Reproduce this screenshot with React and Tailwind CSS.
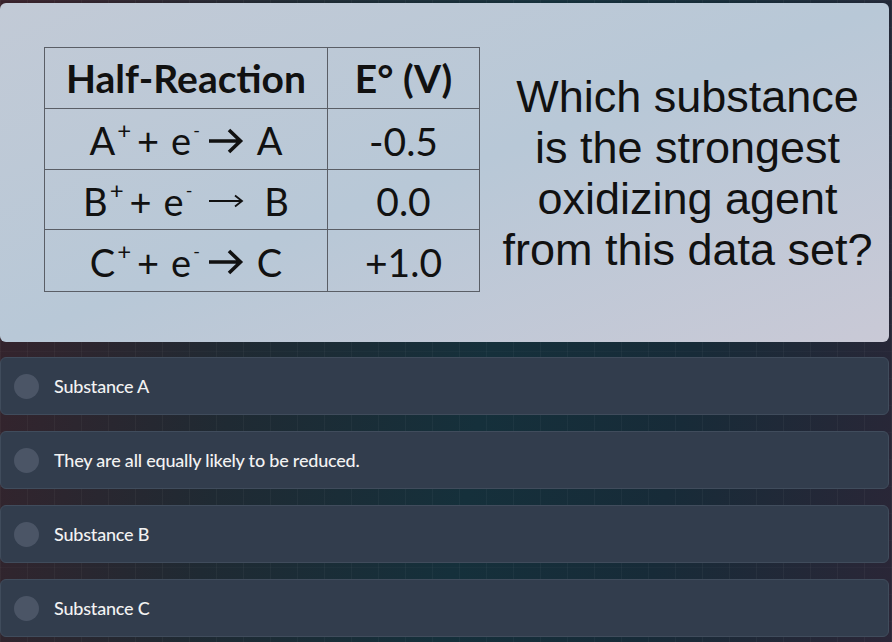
import React from "react";

const options = [
  "Substance A",
  "They are all equally likely to be reduced.",
  "Substance B",
  "Substance C",
];

const HeavyArrow = () => (
  <svg width="36" height="26" viewBox="0 0 36 26" className="ml-[8px] mr-[13px] inline-block">
    <path d="M1 13 H32 M21 2 L32.5 13 L21 24" fill="none" stroke="#111" strokeWidth="3.6" strokeLinejoin="miter" />
  </svg>
);

const ThinArrow = () => (
  <svg width="36" height="16" viewBox="0 0 36 16" className="ml-[16px] mr-[20px] inline-block">
    <path d="M1 8 H34 M27 2.5 L34 8 L27 13.5" fill="none" stroke="#111" strokeWidth="1.8" />
  </svg>
);

const Sup = ({ children, small }) => (
  <span className={`relative top-[-11px] leading-none ml-[2px] ${small ? "text-[18px]" : "text-[24px]"}`}>{children}</span>
);

const rows = [
  { ion: "A", arrow: "heavy", value: "-0.5" },
  { ion: "B", arrow: "thin", value: "0.0" },
  { ion: "C", arrow: "heavy", value: "+1.0" },
];

const App = () => {
  return (
    <div className="w-[892px] h-[642px] overflow-hidden pt-[3px] bg-[linear-gradient(to_right,rgba(255,255,255,0.035)_1px,transparent_1px),linear-gradient(to_bottom,rgba(255,255,255,0.02)_1px,transparent_1px),linear-gradient(100deg,#39222b_0%,#1f2a33_30%,#15303b_55%,#172b38_75%,#2b2637_100%)] bg-[size:27px_27px,27px_27px,100%_100%] font-['Lato',sans-serif]">
      {/* Question image */}
      <div className="w-[889px] h-[339px] rounded-md bg-gradient-to-br from-[#c2cad6] via-[#b8c8d7] to-[#c9c9d6] flex items-start pt-[44px] pl-[44px]">
        <div className="w-[436px] border-[1.5px] border-[#5a5e66] text-[#111] font-['Lato',sans-serif]">
          <div className="flex h-[61px] border-b-[1.5px] border-[#5a5e66]">
            <div className="w-[283px] border-r-[1.5px] border-[#5a5e66] flex items-center justify-center text-[39px] font-bold">Half-Reaction</div>
            <div className="flex-1 flex items-center justify-center text-[39px] font-bold">E° (V)</div>
          </div>
          {rows.map((r, i) => (
            <div key={r.ion} className={`flex h-[60.5px] ${i < 2 ? "border-b-[1.5px] border-[#5a5e66]" : ""}`}>
              <div className="w-[283px] border-r-[1.5px] border-[#5a5e66] flex items-center justify-center text-[38px] pt-[4px]">
                <span>{r.ion}</span>
                <Sup>+</Sup>
                <span className="ml-[6px]">+</span>
                <span className="ml-[12px]">e</span>
                <Sup small>-</Sup>
                {r.arrow === "heavy" ? <HeavyArrow /> : <ThinArrow />}
                <span>{r.ion}</span>
              </div>
              <div className="flex-1 flex items-center justify-center text-[39px] pt-[4px]">{r.value}</div>
            </div>
          ))}
        </div>
        <div className="flex-1 pt-[24px] pl-[6px] text-center text-[45px] leading-[51px] text-[#111] font-['Liberation_Sans',Arial,sans-serif]">
          Which substance<br />is the strongest<br />oxidizing agent<br />from this data set?
        </div>
      </div>

      {/* Answer options */}
      <div className="mt-[15px] flex flex-col gap-[16px]">
        {options.map((opt) => (
          <div key={opt} className="w-[889px] h-[58px] rounded-md bg-[#323d4d] border border-[#404c5c] flex items-center">
            <div className="ml-[13px] w-[25px] h-[25px] rounded-full bg-[#4b5566]"></div>
            <span className="ml-[15px] text-[18px] font-medium text-[#f2f2f2] tracking-[-0.2px]">{opt}</span>
          </div>
        ))}
      </div>
    </div>
  );
};

export default App;
